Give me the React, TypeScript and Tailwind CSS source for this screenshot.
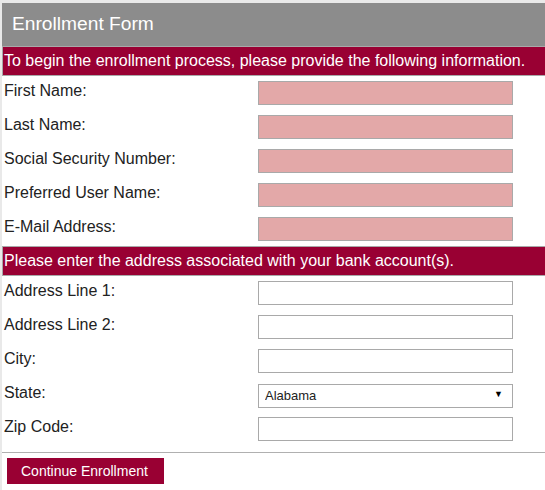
const requiredFields = [
  'First Name:',
  'Last Name:',
  'Social Security Number:',
  'Preferred User Name:',
  'E-Mail Address:',
];

const addressFields = ['Address Line 1:', 'Address Line 2:', 'City:'];

const Banner = ({ children }: { children: React.ReactNode }) => (
  <div className="h-[30px] flex items-center pl-[1px] bg-[#990033] border border-[#a9a9a9] border-r-0 text-white text-[16px]">
    {children}
  </div>
);

const Row = ({ label, children }: { label: string; children: React.ReactNode }) => (
  <div className="flex items-start py-[5px]">
    <div className="w-[255px] pl-[1px] text-[16px] leading-[18px] pt-[1px] text-[#222]">{label}</div>
    {children}
  </div>
);

export default function App() {
  return (
    <div
      className="min-h-[490px] bg-[#e9e9e9] pt-[3px] pl-[2px] overflow-hidden"
      style={{ fontFamily: '"Liberation Sans", Arial, sans-serif' }}
    >
      <div className="bg-white min-h-[487px]">
        <div className="h-[43px] bg-[#8c8c8c] flex items-center pl-[10px] text-white text-[19.2px]">
          Enrollment Form
        </div>
        <Banner>To begin the enrollment process, please provide the following information.</Banner>
        <div className="pl-[1px]">
          {requiredFields.map((f) => (
            <Row key={f} label={f}>
              <input className="w-[255px] h-[24px] bg-[#e3a8a8] border border-[#a9a9a9] outline-none" />
            </Row>
          ))}
        </div>
        <Banner>Please enter the address associated with your bank account(s).</Banner>
        <div className="pl-[1px]">
          {addressFields.map((f) => (
            <Row key={f} label={f}>
              <input className="w-[255px] h-[24px] bg-white border border-[#a9a9a9] outline-none" />
            </Row>
          ))}
          <Row label="State:">
            <div className="relative w-[255px] h-[24px]">
              <select className="appearance-none w-full h-full bg-white border border-[#a9a9a9] pl-[6px] text-[13px] text-[#222] outline-none">
                <option>Alabama</option>
              </select>
              <span className="absolute right-[10px] top-[7px] text-[9px] leading-none text-black pointer-events-none">▼</span>
            </div>
          </Row>
          <Row label="Zip Code:">
            <input className="w-[255px] h-[24px] bg-white border border-[#a9a9a9] outline-none" />
          </Row>
        </div>
        <div className="mt-[6px] border-t border-[#b0b0b0] pt-[5px] pl-[5px]">
          <button className="w-[157px] h-[26px] bg-[#990033] text-white text-[14px] text-left pl-[14px]">
            Continue Enrollment
          </button>
        </div>
      </div>
    </div>
  );
}
